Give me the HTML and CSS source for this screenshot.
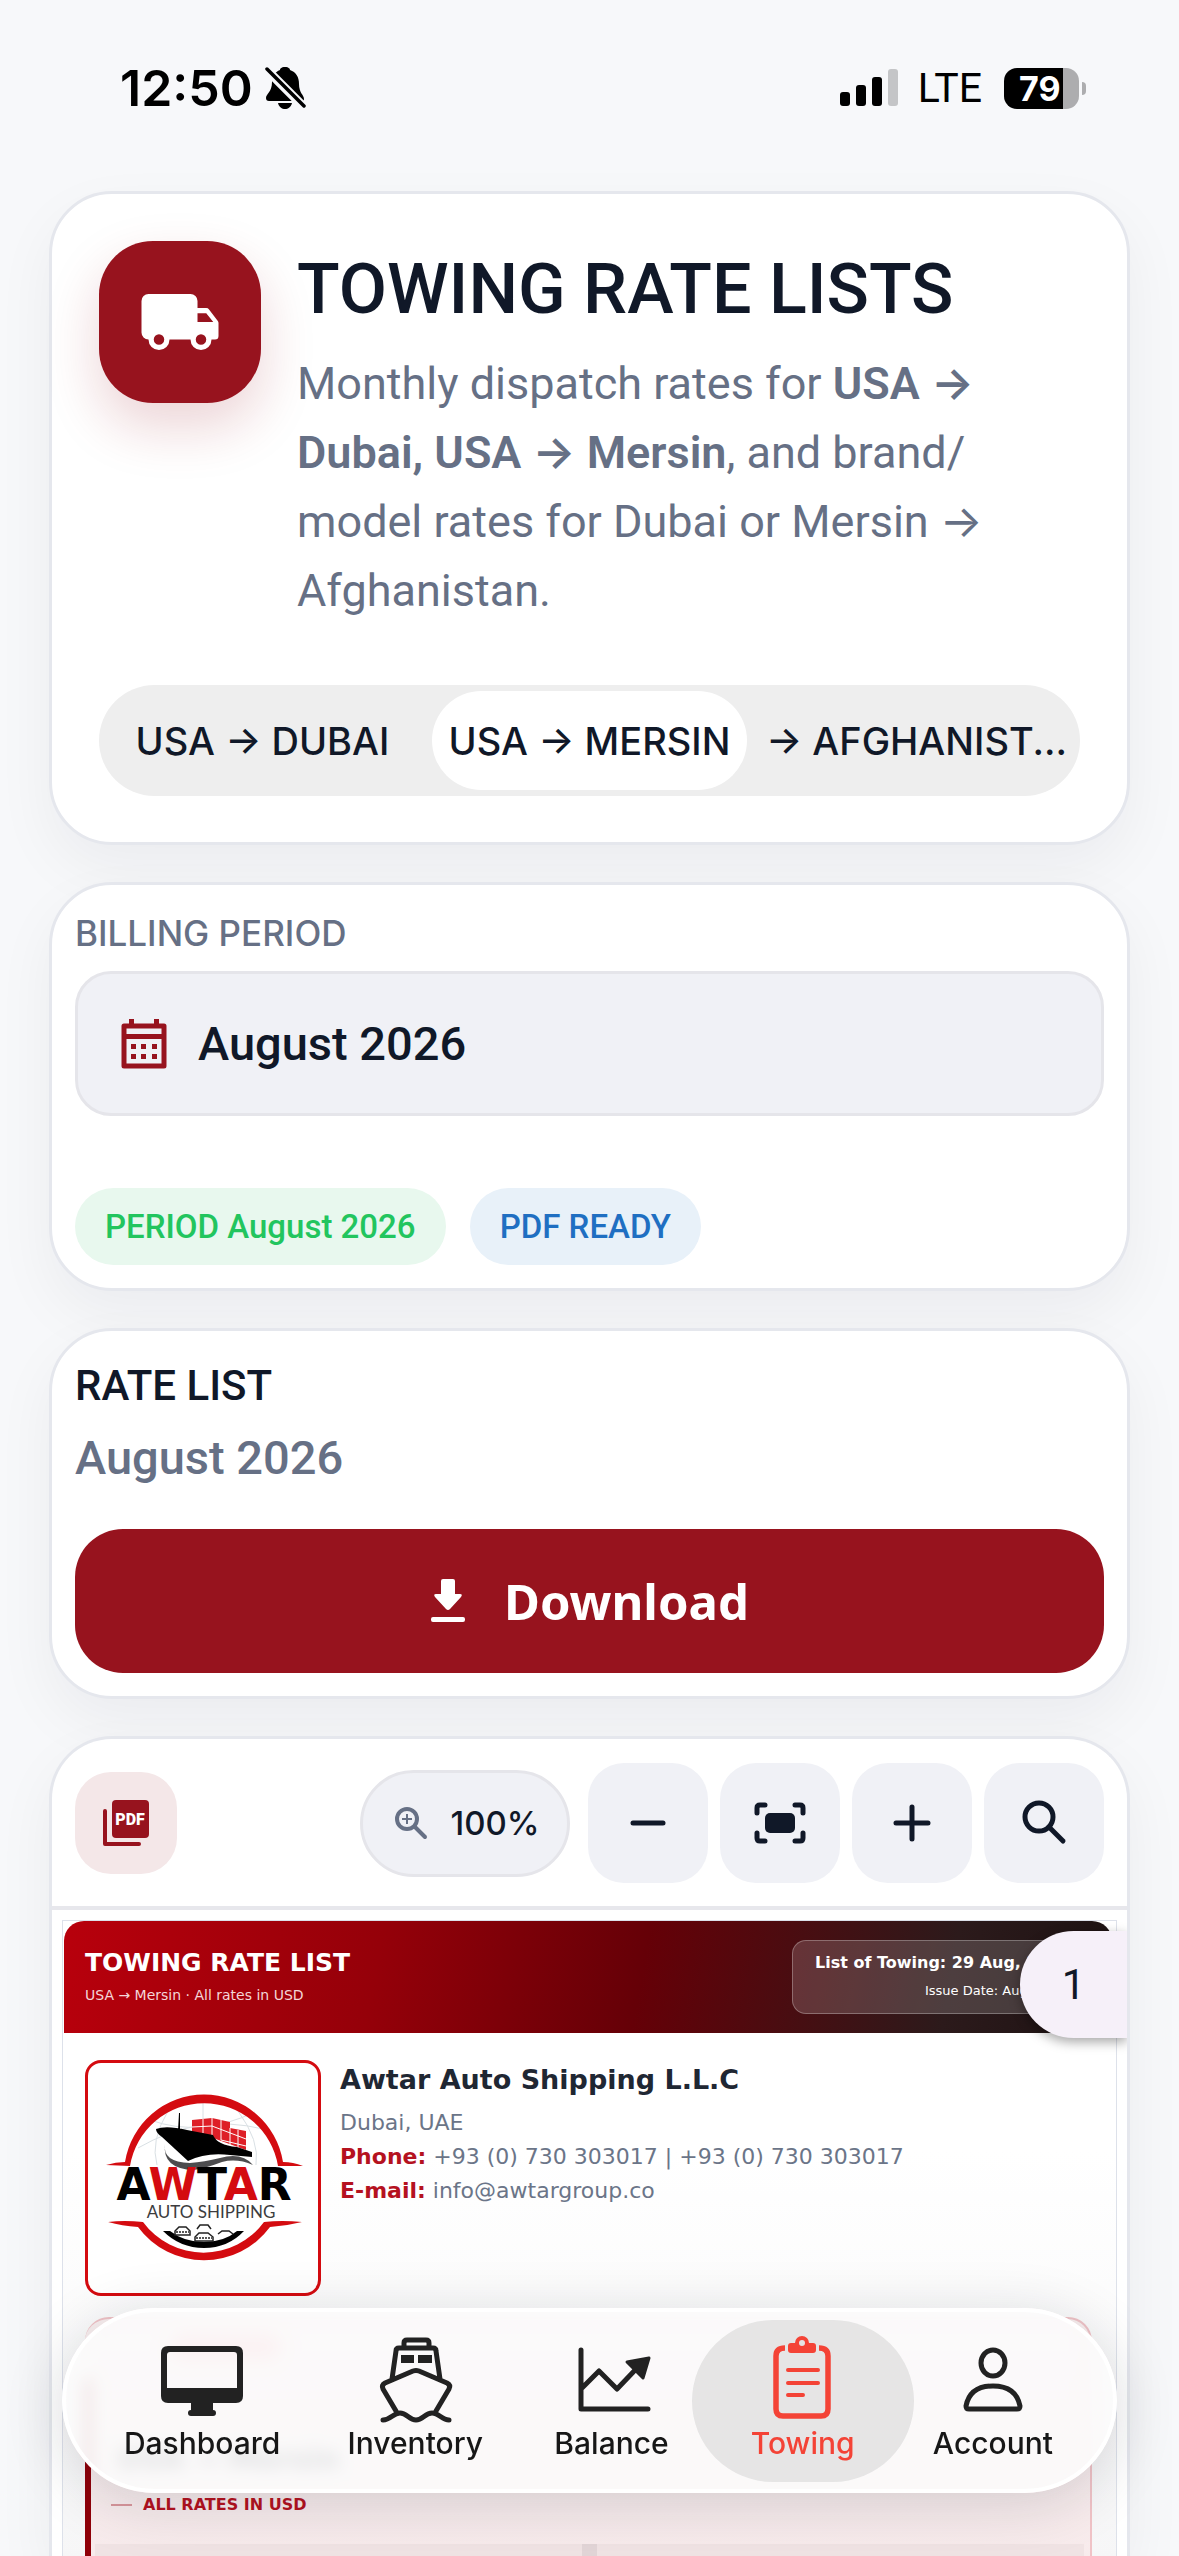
FILE: index.html
```html
<!DOCTYPE html>
<html lang="en">
<head>
<meta charset="utf-8">
<meta name="viewport" content="width=device-width, initial-scale=1">
<title>Towing Rate Lists</title>
<link rel="stylesheet" href="styles.css">
</head>
<body>
<div class="app">
  <header class="status">
    <div class="status-side">
      <span class="status-time">12:50</span>
      <svg class="bell" viewBox="0 0 42 44" aria-hidden="true">
        <path d="M20 1c4 0 5 2 5 3 6 2 9 7 9 14 0 9 5 11 5 15 0 2-1 2-3 2H4c-2 0-3-1-3-3 0-4 6-6 6-16C7 10 10 6 15 4c0-1 1-3 5-3z"/>
        <path d="M13 37h14c-1 4-4 6-7 6s-6-2-7-6z"/>
        <path d="M0 2l40 40" stroke="#f7f8fa" stroke-width="9"/>
        <path d="M2 3l37 37" stroke="#000" stroke-width="3.500" stroke-linecap="round"/>
      </svg>
    </div>
    <div class="status-side">
      <svg class="signal" viewBox="0 0 58 38" aria-hidden="true">
        <rect y="23" width="10" height="14" rx="3"/><rect x="16" y="16" width="10" height="21" rx="3"/>
        <rect x="32" y="8" width="10" height="29" rx="3"/><rect x="48" width="10" height="37" rx="3" fill="#c4c5c7"/>
      </svg>
      <span class="status-net">LTE</span>
      <span class="battery"><span class="battery-level">79</span></span>
    </div>
  </header>

  <main class="content">
    <section class="card hero">
      <div class="hero-top">
        <div class="hero-icon">
          <svg viewBox="0 0 24 24" aria-hidden="true"><path fill="#fff" fill-rule="evenodd" d="M3 4h12a2 2 0 0 1 2 2v2h2.500a1 1 0 0 1 .8.4l2.500 3.300a1 1 0 0 1 .2.600V16a1 1 0 0 1-1 1h-1a3 3 0 0 1-6 0H9a3 3 0 0 1-6 0 2 2 0 0 1-2-2V6a2 2 0 0 1 2-2zm3 11.500a1.500 1.500 0 1 0 0 3 1.500 1.500 0 0 0 0-3zm12 0a1.500 1.500 0 1 0 0 3 1.500 1.500 0 0 0 0-3zM17 9.500V12h4.500l-2-2.500z"/></svg>
        </div>
        <div class="hero-text">
          <h1>TOWING RATE LISTS</h1>
          <p>Monthly dispatch rates for <strong>USA → Dubai, USA → Mersin</strong>, and brand/<wbr>model rates for Dubai or Mersin → Afghanistan.</p>
        </div>
      </div>
      <div class="segments" role="tablist">
        <button class="segment" role="tab" type="button" aria-selected="false">USA → DUBAI</button>
        <button class="segment selected" role="tab" type="button" aria-selected="true">USA → MERSIN</button>
        <button class="segment" role="tab" type="button" aria-selected="false">→ AFGHANIST...</button>
      </div>
    </section>

    <section class="card">
      <div class="field-label" id="period-label">BILLING PERIOD</div>
      <button class="field" type="button" aria-describedby="period-label">
        <svg class="calendar" viewBox="0 0 48 52" aria-hidden="true">
          <path fill="none" stroke="#97131e" stroke-width="5" stroke-linejoin="round" d="M4 8h40v40H4z"/>
          <path fill="#97131e" d="M9 1h5v7H9zM34 1h5v7h-5zM3 16h42v5H3zM11 26h5v5h-5zM21 26h5v5h-5zM32 26h5v5h-5zM11 36h5v5h-5zM21 36h5v5h-5zM32 36h5v5h-5z"/>
        </svg>
        <span>August 2026</span>
      </button>
      <div class="chips">
        <span class="chip green">PERIOD August 2026</span>
        <span class="chip blue">PDF READY</span>
      </div>
    </section>

    <section class="card">
      <h2>RATE LIST</h2>
      <p class="rate-period">August 2026</p>
      <button class="download" type="button">
        <svg viewBox="0 0 36 44" aria-hidden="true"><path fill="#fff" d="M11 2q0-2 2-2h10q2 0 2 2v13h5q3 0 1 3L20 30q-2 2-4 0L5 18q-2-3 1-3h5zM3 38h30q2 0 2 2v1q0 2-2 2H3q-2 0-2-2v-1q0-2 2-2z"/></svg>
        <span>Download</span>
      </button>
    </section>

    <section class="card viewer">
      <div class="toolbar">
        <div class="pdf-tile">
          <svg viewBox="0 0 48 48" aria-hidden="true">
            <path fill="none" stroke="#97131e" stroke-width="4" stroke-linecap="round" stroke-linejoin="round" d="M3 12v33h34"/>
            <rect x="10" y="1" width="37" height="38" rx="4" fill="#97131e"/>
            <text class="pdf-text" x="28" y="26" text-anchor="middle">PDF</text>
          </svg>
        </div>
        <div class="zoom-level">
          <svg viewBox="0 0 34 34" aria-hidden="true"><g fill="none" stroke="#667085"><circle cx="13" cy="13" r="10" stroke-width="4"/><path stroke-width="4" stroke-linecap="round" d="M21 21l10 10"/><path stroke-width="2" d="M13 8v10M8 13h10"/></g></svg>
          <span>100%</span>
        </div>
        <button class="tool" type="button" aria-label="Zoom out"><svg viewBox="0 0 60 60"><path d="M15 30h30"/></svg></button>
        <button class="tool" type="button" aria-label="Fit to screen"><svg viewBox="0 0 60 60"><path d="M7 20v-5q0-3 3-3h5M45 12h5q3 0 3 3v5M53 40v5q0 3-3 3h-5M15 48h-5q-3 0-3-3v-5"/><rect x="15" y="20" width="30" height="20" rx="5" fill="#101828" stroke="none"/></svg></button>
        <button class="tool" type="button" aria-label="Zoom in"><svg viewBox="0 0 60 60"><path d="M14 30h32M30 14v32"/></svg></button>
        <button class="tool" type="button" aria-label="Search"><svg viewBox="0 0 60 60"><circle cx="25" cy="24" r="14"/><path d="M35 34l14 14"/></svg></button>
      </div>

      <div class="stage">
        <article class="doc">
          <header class="doc-header">
            <div>
              <div class="doc-title">TOWING RATE LIST</div>
              <div class="doc-sub">USA → Mersin · All rates in USD</div>
            </div>
            <div class="doc-meta">
              <div class="doc-list">List of Towing: 29 Aug, 2026</div>
              <div class="doc-issue">Issue Date: Aug, 2026</div>
            </div>
          </header>
          <div class="company">
            <div class="logo">
              <svg viewBox="0 0 230 230" role="img" aria-label="Awtar Auto Shipping">
                <g fill="none" stroke="#d9e0e4" stroke-width="1">
                  <path d="M50 85q60-35 125-19M62 57q50 18 105-8M115 40v38M80 48q-18 30-11 54M150 48q22 30 18 54"/>
                </g>
                <path fill="#d40b10" d="M18 102q10-3 19-3a80 80 0 0 1 158 0q10 0 20 4h-25a75 75 0 0 0-148 0zM20 159q16-2 35 0a75 75 0 0 0 121 0q18-2 38 0-16 4-32 5a82 82 0 0 1-132 0q-16-1-30-5z"/>
                <path fill="#de1f27" d="M104 57l20-2 18 4v6l16 3v19l-33-12-21-5z"/>
                <path fill="none" stroke="#fff" stroke-width="1" d="M104 64l20-1 34 13M124 55v17M115 56v14M133 57v20M142 65v18M150 67v18M133 77l25 6"/>
                <path d="M68 66q10-4 31 1l26 5q4 10 24 12l15 5v5l-22-2q-24-3-42 6L74 74q-6-4-6-8zM91 50h1v18h-2z"/>
                <path fill="#4c4c4e" d="M77 81q-3 18 25 19 14-1 30-5 22-6 33 7-16-7-31-3-16 6-28 8-32-1-29-26z"/>
                <text class="logo-name" x="116" y="137" text-anchor="middle">A<tspan fill="#d40b10">W</tspan>T<tspan fill="#d40b10">A</tspan>R</text>
                <text class="logo-sub" x="123" y="155" text-anchor="middle">AUTO SHIPPING</text>
                <path d="M75 168h7q14 11 34 11t33-11h7q-16 17-40 17t-41-17z"/>
                <g fill="#fff" stroke="#222" stroke-width="1.500"><path d="M87 172v-4l4-4h7l4 4v4zM109 166l3-4h8l3 4M107 178v-4l4-4h9l5 4v4zM130 171l4-3h7l4 3"/><path stroke-dasharray="2 1" d="M88 169h13M108 175h16"/></g>
              </svg>
            </div>
            <address>
              <div class="company-name">Awtar Auto Shipping L.L.C</div>
              <div>Dubai, UAE</div>
              <div><b>Phone:</b> +93 (0) 730 303017 | +93 (0) 730 303017</div>
              <div><b>E-mail:</b> info@awtargroup.co</div>
            </address>
          </div>
          <section class="lane">
            <div class="lane-tag"></div>
            <div class="lane-name">USA → Mersin</div>
            <div class="lane-note">ALL RATES IN USD</div>
            <div class="lane-head"><span></span></div>
          </section>
        </article>
        <div class="page-number">1</div>
      </div>
    </section>
  </main>

  <nav class="tabbar">
    <a class="tab" href="#dashboard">
      <svg viewBox="0 0 96 96" aria-hidden="true"><path fill="#222" fill-rule="evenodd" d="M14 14h68q7 0 7 7v43q0 7-7 7H59v7q3 0 3 3t-3 3H37q-3 0-3-3t3-3v-7H14q-7 0-7-7V21q0-7 7-7zm2 6q-3 0-3 3v33h70V23q0-3-3-3z"/></svg>
      <span>Dashboard</span>
    </a>
    <a class="tab" href="#inventory">
      <svg viewBox="0 0 96 96" aria-hidden="true"><g fill="none" stroke="#222" stroke-width="5" stroke-linecap="round" stroke-linejoin="round"><path d="M37 15v-4q0-3 3-3h19q3 0 3 3v4M25 47l4-28q0-3 3-3h34q3 0 3 3l4 28M29 79L16 57q-2-4 2-6l28-12q3-1 6 0l28 12q4 2 2 6L69 79M16 88c8 0 10-7 17-7s9 7 16 7 9-7 16-7 10 7 17 7"/></g><path fill="#222" d="M34 23h13v8H34zM51 23h14v8H51z"/></svg>
      <span>Inventory</span>
    </a>
    <a class="tab" href="#balance">
      <svg viewBox="0 0 96 96" aria-hidden="true"><g fill="none" stroke="#222" stroke-width="5" stroke-linecap="round" stroke-linejoin="round"><path d="M17 18v59h67M18 56l17-17 18 18 21-22"/><path fill="#222" stroke-width="3" d="M63 30l22-4-6 20z"/></g></svg>
      <span>Balance</span>
    </a>
    <a class="tab active" href="#towing" aria-current="page">
      <svg viewBox="0 0 96 96" aria-hidden="true"><g fill="none" stroke="#f44336" stroke-width="5.500" stroke-linecap="round"><path stroke-linecap="butt" d="M30 16q-9 0-9 8v53q0 7 7 7h38q7 0 7-7V24q0-8-9-8"/><path stroke-width="4" d="M33 38h30M33 51h30M33 63h15"/></g><path fill="#f44336" fill-rule="evenodd" d="M47 4a7 7 0 0 1 7 7h4q3 0 3 3v4q0 3-3 3H36q-3 0-3-3v-4q0-3 3-3h4a7 7 0 0 1 7-7zm0 4a3 3 0 1 0 0 6 3 3 0 0 0 0-6z"/></svg>
      <span>Towing</span>
    </a>
    <a class="tab" href="#account">
      <svg viewBox="0 0 96 96" aria-hidden="true"><g fill="none" stroke="#222" stroke-width="5" stroke-linejoin="round"><ellipse cx="48" cy="31" rx="12" ry="13"/><path d="M21 74q4-20 27-20t27 20q0 3-3 3H24q-3 0-3-3z"/></g></svg>
      <span>Account</span>
    </a>
  </nav>
</div>
</body>
</html>
```
FILE: styles.css
```css
* { box-sizing: border-box; }

body {
  margin: 0;
  background: #f7f8fa;
  color: #101828;
  font-family: Inter, "Liberation Sans", sans-serif;
}

button { font: inherit; color: inherit; border: 0; padding: 0; }
h1, h2, p { margin: 0; }

/* Headings and values use the narrower face */
h1, h2, .hero-text p, .field, .chip, .rate-period, .status-net {
  font-family: Roboto, Inter, sans-serif;
}

.app {
  height: 100vh;
  overflow: hidden;
  display: flex;
  flex-direction: column;
}

/* Status bar */
.status {
  display: flex;
  justify-content: space-between;
  align-items: center;
  padding: 56px 92px 71px 120px;
  color: #000;
}
.status-side { display: flex; align-items: center; height: 64px; }
.status-time { font-size: 50px; font-weight: 600; margin-right: 12px; }
.bell { width: 42px; height: 44px; }
.signal { width: 58px; height: 38px; }
.status-net { font-size: 41px; margin: 0 22px 0 20px; }
.battery {
  position: relative;
  width: 75px;
  height: 41px;
  margin-right: 8px;
  border-radius: 13px;
  background: linear-gradient(to right, #000 59px, #adadaf 59px);
  color: #fff;
}
.battery::after {
  content: "";
  position: absolute;
  right: -7px;
  top: 14px;
  width: 4px;
  height: 13px;
  border-radius: 0 4px 4px 0;
  background: #adadaf;
}
.battery-level {
  display: block;
  padding-left: 15px;
  font-size: 34px;
  line-height: 41px;
  font-weight: 700;
}

/* Cards */
.content {
  flex: 1;
  min-height: 0;
  display: flex;
  flex-direction: column;
  gap: 37px;
  padding: 0 49px;
}
.card {
  flex: none;
  padding: 23px;
  border: 3px solid #e5e7ed;
  border-radius: 63px;
  background: #fff;
  box-shadow: 0 24px 60px rgba(16, 24, 40, .05);
}

.hero { padding: 47px 47px 46px; }
.hero-top { display: flex; gap: 36px; }
.hero-icon {
  flex: none;
  display: grid;
  place-items: center;
  width: 162px;
  height: 162px;
  border-radius: 54px;
  background: #97131e;
  box-shadow: 0 24px 54px rgba(151, 19, 30, .18);
}
.hero-icon svg { width: 84px; height: 84px; }
.hero-text { flex: 1; }
h1 { font-size: 70px; line-height: 96px; font-weight: 500; white-space: nowrap; }
.hero-text p {
  margin-top: 12px;
  padding-right: 80px;
  font-size: 45px;
  line-height: 69px;
  color: #667085;
}
.hero-text strong { font-weight: 600; }

.segments {
  display: grid;
  grid-template-columns: repeat(3, minmax(0, 1fr));
  height: 111px;
  margin-top: 60px;
  border-radius: 56px;
  background: #eee;
}
.segment {
  margin: 6px;
  border-radius: 50px;
  background: none;
  font-size: 38px;
  font-weight: 500;
  white-space: nowrap;
}
.segment.selected { background: #fff; }

.field-label { font-size: 35px; line-height: 51px; font-weight: 500; color: #667085; }
.field {
  display: flex;
  align-items: center;
  gap: 30px;
  width: 100%;
  height: 145px;
  margin-top: 12px;
  padding: 0 42px;
  border: 3px solid #e5e5ea;
  border-radius: 36px;
  background: #f0f1f6;
  font-size: 47px;
  font-weight: 500;
}
.calendar { width: 48px; height: 52px; }
.chips { display: flex; gap: 24px; margin-top: 72px; }
.chip {
  padding: 0 30px;
  border-radius: 39px;
  font-size: 33px;
  line-height: 77px;
  font-weight: 500;
}
.chip.green { background: #e8f8ee; color: #22c55e; }
.chip.blue { background: #e8f1f9; color: #1f6fc2; }

h2 { font-size: 42px; line-height: 64px; font-weight: 500; }
.rate-period { margin-top: 4px; font-size: 47px; line-height: 72px; font-weight: 500; color: #667085; }
.download {
  display: flex;
  align-items: center;
  justify-content: center;
  gap: 38px;
  width: 100%;
  height: 144px;
  margin-top: 35px;
  border-radius: 48px;
  background: #97131e;
  color: #fff;
  font: 700 49px "Noto Sans", sans-serif;
}
.download svg { width: 36px; height: 44px; }

/* PDF viewer */
.viewer {
  flex: 1;
  min-height: 0;
  display: flex;
  flex-direction: column;
  padding: 0;
  border-bottom: 0;
  border-radius: 63px 63px 0 0;
  overflow: hidden;
}
.toolbar {
  flex: none;
  display: flex;
  align-items: center;
  gap: 12px;
  padding: 24px 23px 23px;
  border-bottom: 4px solid #e7e7ec;
}
.pdf-tile {
  display: grid;
  place-items: center;
  width: 102px;
  height: 102px;
  margin-right: auto;
  border-radius: 36px;
  background: #f4e7e8;
}
.pdf-tile svg { width: 48px; height: 48px; }
.pdf-text { font: 900 16px Roboto, sans-serif; fill: #fff; }
.zoom-level {
  display: flex;
  align-items: center;
  justify-content: center;
  gap: 22px;
  width: 210px;
  height: 107px;
  margin-right: 6px;
  padding-left: 4px;
  border: 3px solid #e5e5ea;
  border-radius: 54px;
  background: #f0f1f6;
  font-size: 33px;
  font-weight: 500;
}
.zoom-level svg { width: 34px; height: 34px; }
.tool {
  display: grid;
  place-items: center;
  width: 120px;
  height: 120px;
  border-radius: 36px;
  background: #f0f1f6;
}
.tool svg {
  width: 60px;
  height: 60px;
  fill: none;
  stroke: #101828;
  stroke-width: 5;
  stroke-linecap: round;
}

.stage { position: relative; flex: 1; min-height: 0; padding: 10px 10px 0; }
.page-number {
  position: absolute;
  top: 21px;
  right: 0;
  width: 107px;
  border-radius: 54px 0 0 54px;
  background: #f6f0f9;
  box-shadow: 0 4px 12px rgba(0, 0, 0, .35);
  font: 42px/107px Roboto, sans-serif;
  text-align: center;
}

/* Document page */
.doc {
  display: flex;
  flex-direction: column;
  height: 100%;
  overflow: hidden;
  padding: 0 1px;
  border: 1px solid #dde1ea;
  border-bottom: 0;
  background: linear-gradient(#fff 230px, #f6f6f7 640px);
  font-family: "DejaVu Sans", sans-serif;
}
.doc-header {
  flex: none;
  display: flex;
  align-items: center;
  justify-content: space-between;
  height: 112px;
  padding: 0 20px 0 21px;
  margin-right: 3px;
  border-radius: 20px 20px 0 0;
  background: linear-gradient(100deg, #b8000c 0%, #950009 30%, #650007 55%, #2c1a1b 84%, #1c1213 100%);
  color: #fff;
}
.doc-title { font-size: 25px; line-height: 36px; font-weight: 700; }
.doc-sub { font-size: 14px; line-height: 28px; color: #f4d6d8; }
.doc-meta {
  width: 300px;
  padding: 8px 22px;
  border: 1px solid rgba(255, 255, 255, .28);
  border-radius: 14px;
  background: rgba(255, 255, 255, .16);
  line-height: 28px;
  text-align: right;
  white-space: nowrap;
}
.doc-list { font-size: 16px; font-weight: 700; }
.doc-issue { font-size: 13px; }
.company { flex: none; display: flex; gap: 19px; padding: 27px 20px 21px 21px; }
.logo {
  width: 236px;
  height: 236px;
  border: 3px solid #d40b10;
  border-radius: 16px;
  background: #fff;
}
.logo svg { display: block; width: 230px; height: 230px; }
.logo-name { font: 700 44px "DejaVu Sans", sans-serif; }
.logo-sub { font: 17px Lato, sans-serif; fill: #3c3c3e; }
address { font-size: 22px; line-height: 34px; font-style: normal; color: #6b7588; }
address b { color: #b5121f; }
.company-name { margin-bottom: 6px; font-size: 27px; line-height: 40px; font-weight: 700; color: #1f2733; }

.lane {
  flex: 1;
  margin: 0 23px 0 21px;
  padding: 14px 6px 0;
  border: 2px solid #f0c3c7;
  border-left: 0;
  border-radius: 24px 24px 0 0;
  background: linear-gradient(to right, #8f0009 6px, transparent 6px) 0 60px no-repeat, linear-gradient(#faf0f1, #f7eaeb);
}
.lane-tag { width: 110px; height: 28px; margin-left: 80px; border-radius: 14px; background: #ffb9c2; }
.lane-name { margin: 74px 0 0 26px; font-size: 29px; line-height: 48px; font-weight: 700; color: #1f2733; }
.lane-note {
  display: flex;
  align-items: center;
  gap: 11px;
  margin: 4px 0 0 20px;
  font-size: 16px;
  line-height: 36px;
  font-weight: 700;
  color: #b5121f;
}
.lane-note::before { content: ""; width: 21px; height: 2px; background: #d9979c; }
.lane-head { height: 60px; margin: 21px 0 0 4px; background: #f0e3e4; }
.lane-head span { display: block; width: 15px; height: 60px; margin: 0 auto; background: #e2d5d7; }

/* Bottom navigation */
.tabbar {
  position: fixed;
  left: 62px;
  right: 62px;
  bottom: 63px;
  display: grid;
  grid-template-columns: 222fr 204fr 188fr 194fr 186fr;
  height: 185px;
  padding: 0 27px 0 25px;
  border: 4px solid #fff;
  border-radius: 94px;
  background: rgba(251, 250, 250, .88);
  backdrop-filter: blur(8px);
  box-shadow: 0 10px 60px rgba(16, 24, 40, .16);
}
.tab {
  display: flex;
  flex-direction: column;
  align-items: center;
  height: 162px;
  margin-top: 8px;
  padding-top: 12px;
  border-radius: 81px;
  color: #171717;
  font-size: 30px;
  line-height: 31px;
  font-weight: 500;
  text-decoration: none;
}
.tab svg { width: 96px; height: 96px; }
.tab.active { margin-left: -14px; margin-right: -14px; background: #e6e5e5; color: #f44336; }
```
